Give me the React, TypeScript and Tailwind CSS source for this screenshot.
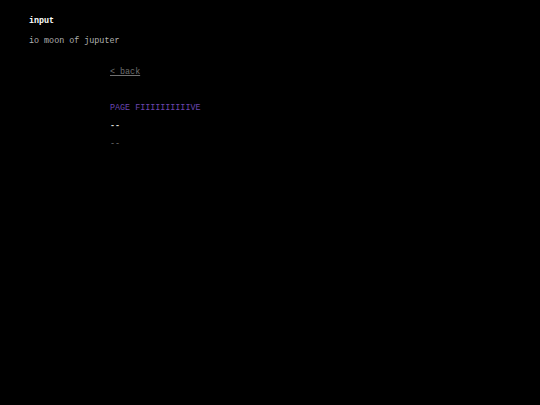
export default function App() {
  return (
    <div className="min-h-[405px] w-full bg-black px-[29px] pt-[15px] text-[8.4px] leading-[12px] font-['Courier_New','Liberation_Mono',monospace]">
      <div className="font-bold text-white">input</div>
      <div className="mt-[8px] text-[#b0b0b0]">io moon of juputer</div>

      <div className="ml-[81px] mt-[19px] flex flex-col">
        <a href="#" className="text-[#707070] underline">&lt; back</a>
        <div className="mt-[24px] text-[#6a46b0]">PAGE FIIIIIIIIIIVE</div>
        <div className="mt-[6px] font-bold text-[#d6d6d6]">--</div>
        <div className="mt-[6px] text-[#707070]">--</div>
      </div>
    </div>
  )
}
